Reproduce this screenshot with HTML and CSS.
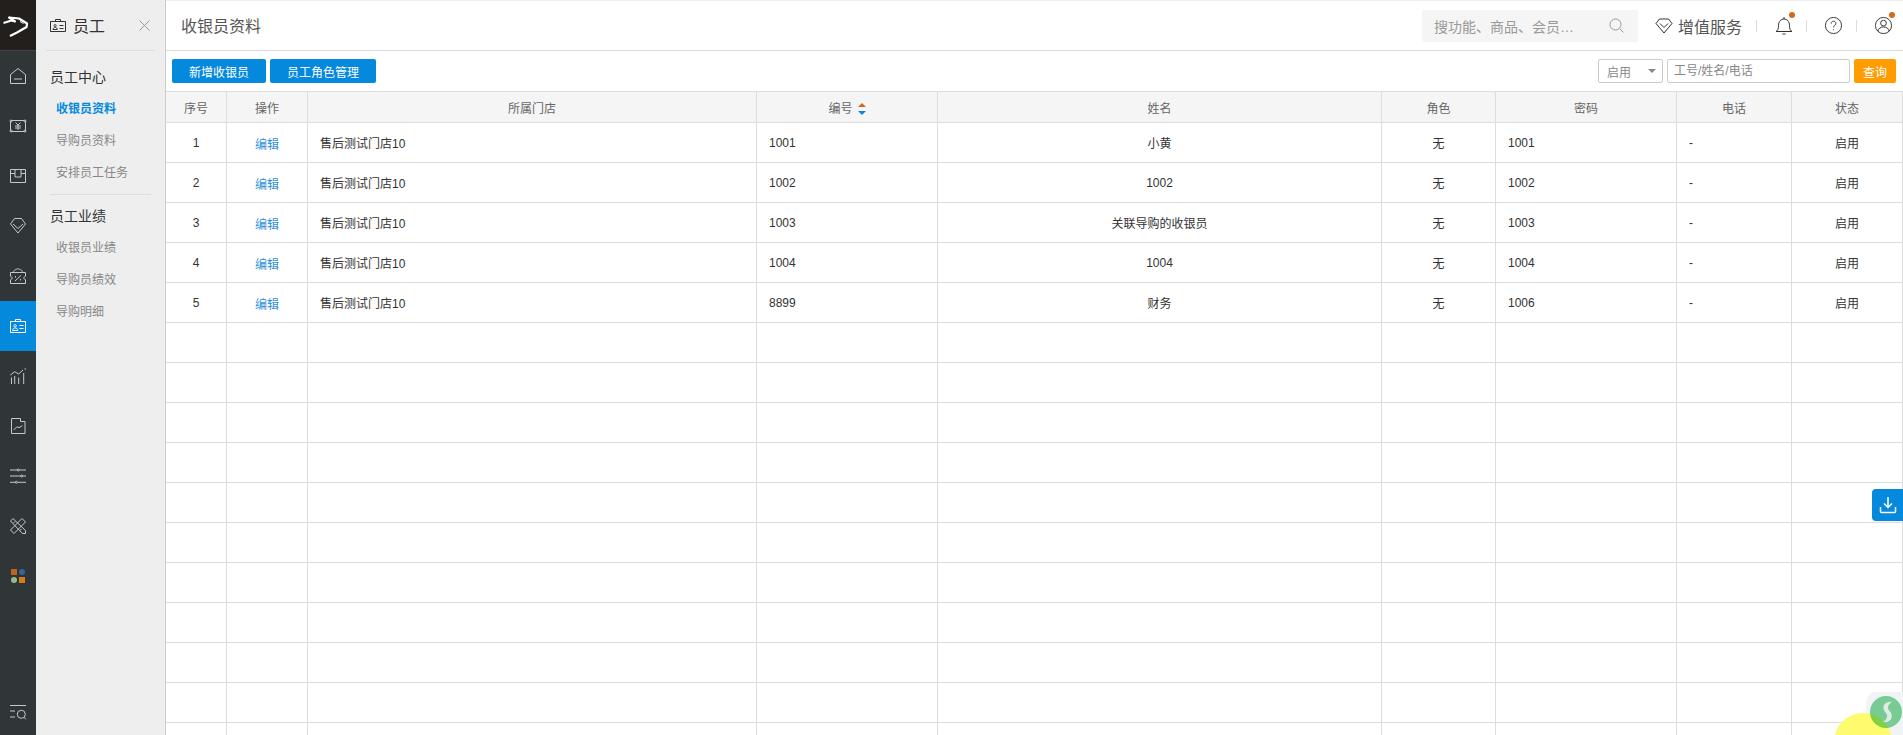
FILE: index.html
```html
<!DOCTYPE html>
<html lang="zh">
<head>
<meta charset="utf-8">
<title>收银员资料</title>
<link rel="stylesheet" href="styles.css">
</head>
<body>
<div class="app">
  <nav class="rail">
    <div class="logo">
      <svg width="36" height="50" viewBox="0 0 36 50"><path class="logo-mark" d="M3.500 23 11.500 20.500 15 21.500 9 17.500 19 18.500 27 23.500 26.500 27 17 32.500 10 36"/><path class="logo-eye" d="M20 21.500l3.500 2"/></svg>
    </div>
    <a class="rail-item"><svg width="18" height="18" viewBox="0 0 18 18"><path d="M1.500 7.500 9 1.500l7.500 6v9h-15zM5 12h8"/></svg></a>
    <a class="rail-item"><svg width="18" height="18" viewBox="0 0 18 18"><path d="M2.500 3.500h13M2.500 14.500h13M1.500 4.500v9M16.500 4.500v9M6.500 5.500 9 8l2.500-2.500M6 9h6M6 11h6M9 8v5"/><circle cx="2" cy="4" r="1"/><circle cx="16" cy="4" r="1"/><circle cx="2" cy="14" r="1"/><circle cx="16" cy="14" r="1"/></svg></a>
    <a class="rail-item"><svg width="18" height="18" viewBox="0 0 18 18"><path d="M1.500 2.500h15v13h-15zM1.500 6.500H6M12 6.500h4.500M6 2.500v7.500h6V2.500"/></svg></a>
    <a class="rail-item"><svg width="18" height="18" viewBox="0 0 18 18"><path d="M5.500 1.500h7l4 5.500L9 16 1.500 7zM4 7l5 4.500L14 7"/></svg></a>
    <a class="rail-item"><svg width="18" height="18" viewBox="0 0 18 18"><path d="M1.500 5.500h15v3.500l-2 2 2 2v3.500h-15V13l2-2-2-2zM4.500 5.500C5 2 7 3 9 1.500c2 1.500 4 .5 4.500 4M6 14l6-5.500M6.500 9v1.500M11.500 12v1.500"/></svg></a>
    <a class="rail-item is-active"><svg width="18" height="18" viewBox="0 0 18 18"><path d="M1.500 4.500h15v11h-15zM6.500 2.500h5v2h-5zM3.500 13.500c.3-3.500 5-3.500 5.300 0zM6.100 7.500a1.200 1.200 0 1 0 .01 0M10.500 8.500h4M10.500 11.500h4"/></svg></a>
    <a class="rail-item"><svg width="18" height="18" viewBox="0 0 18 18"><path d="M1.300 8 5.700 4.700 9.700 7 14 3M2.500 10.500V17M5.700 9v8M9.700 10.500V17M14.700 6v11M15.500 2h1.500"/></svg></a>
    <a class="rail-item"><svg width="18" height="18" viewBox="0 0 18 18"><path d="M2.500 1.500h9v3h4.500v12H2.500zM4.700 13 8 9.700l2 1 3.300-2"/></svg></a>
    <a class="rail-item"><svg width="18" height="18" viewBox="0 0 18 18"><path d="M1 3h7.300m2 0H17M1 9h10.700m2 0H17M1 15.300h5.300m2 0H17"/><circle cx="9.300" cy="3" r="1"/><circle cx="12.700" cy="9" r="1"/><circle cx="7.300" cy="15.300" r="1"/></svg></a>
    <a class="rail-item"><svg width="18" height="18" viewBox="0 0 18 18"><path d="M1.500 4 4 1.500l12.500 12v3h-3zM13 1.500 16.500 5 5 16.500 1.500 13zM6 4.500 4.500 6M12.500 12 11 13.500"/></svg></a>
    <a class="rail-item"><span class="tiles"><i class="tile t1"></i><i class="tile t2"></i><i class="tile t3"></i><i class="tile t4"></i></span></a>
    <a class="rail-item rail-foot"><svg width="18" height="18" viewBox="0 0 18 18"><path d="M1 1.500h16M1 7h5M1 13h5"/><circle cx="12.300" cy="10.300" r="4"/><path d="m15 13.300 2 2"/></svg></a>
  </nav>

  <aside class="subnav">
    <div class="subnav-head">
      <svg class="head-icon" width="16" height="13" viewBox="0 0 16 13"><path d="M.5 2.500h15v10H.5zM5.500.5h5v2h-5zM3 10.500c.3-3 4-3 4.300 0zM5.100 5.500a1.100 1.100 0 1 0 .01 0M9.500 6.500h4M9.500 9.500h4"/></svg>
      <span class="subnav-title">员工</span>
      <svg class="head-close" width="11" height="11" viewBox="0 0 11 11"><path d="m.5.500 10 10m0-10-10 10"/></svg>
    </div>
    <div class="subnav-body">
      <h3 class="group-title">员工中心</h3>
      <a class="group-link is-current">收银员资料</a>
      <a class="group-link">导购员资料</a>
      <a class="group-link">安排员工任务</a>
      <hr class="group-rule">
      <h3 class="group-title">员工业绩</h3>
      <a class="group-link">收银员业绩</a>
      <a class="group-link">导购员绩效</a>
      <a class="group-link">导购明细</a>
    </div>
  </aside>

  <main class="main">
    <header class="topbar">
      <h1 class="page-title">收银员资料</h1>
      <div class="search">
        <span class="search-text">搜功能、商品、会员…</span>
        <svg class="icon-line grey" width="15" height="15" viewBox="0 0 15 15"><circle cx="6.500" cy="6.500" r="5.500"/><path d="m10.500 10.500 4 4"/></svg>
      </div>
      <a class="vip">
        <svg class="icon-line dark" width="18" height="16" viewBox="0 0 18 16"><path d="M4.500 1h9l3.500 4.500L9 15 1 5.500zM5 5.500l4 4 4-4"/></svg>
        <span>增值服务</span>
      </a>
      <i class="sep"></i>
      <span class="top-icon">
        <svg class="icon-line dark" width="18" height="20" viewBox="0 0 18 20"><path d="M1 15.500c2-1 2.500-3 2.500-6C3.500 5.500 6 3 9 3s5.500 2.500 5.500 6.500c0 3 .5 5 2.500 6zM9 1v2M7.500 18h3"/></svg>
        <i class="dot"></i>
      </span>
      <i class="sep"></i>
      <span class="top-icon">
        <svg class="icon-line dark" width="19" height="19" viewBox="0 0 20 20"><circle cx="10" cy="10" r="8.500"/><path d="M7.500 8c0-3.300 5-3.300 5 0 0 2-2.500 2-2.500 4M10 14v1"/></svg>
      </span>
      <i class="sep"></i>
      <span class="top-icon">
        <svg class="icon-line dark" width="19" height="19" viewBox="0 0 20 20"><circle cx="10" cy="10" r="8.500"/><circle cx="10" cy="7.500" r="3"/><path d="M4 16c1-6 11-6 12 0"/></svg>
        <i class="dot"></i>
      </span>
    </header>

    <div class="toolbar">
      <button class="btn btn-add">新增收银员</button>
      <button class="btn btn-role">员工角色管理</button>
      <div class="filters">
        <div class="select"><span>启用</span><i class="caret"></i></div>
        <div class="field">工号/姓名/电话</div>
        <button class="btn btn-query">查询</button>
      </div>
    </div>

    <table class="grid">
      <colgroup>
        <col class="c1"><col class="c2"><col class="c3"><col class="c4"><col class="c5"><col class="c6"><col class="c7"><col class="c8"><col class="c9">
      </colgroup>
      <thead>
        <tr>
          <th>序号</th><th>操作</th><th>所属门店</th>
          <th>编号<span class="sort"><i class="sort-up"></i><i class="sort-down"></i></span></th>
          <th>姓名</th><th>角色</th><th>密码</th><th>电话</th><th>状态</th>
        </tr>
      </thead>
      <tbody>
        <tr><td class="mid">1</td><td class="mid op"><a class="edit">编辑</a></td><td>售后测试门店10</td><td>1001</td><td class="mid">小黄</td><td class="mid">无</td><td>1001</td><td>-</td><td class="mid">启用</td></tr>
        <tr><td class="mid">2</td><td class="mid op"><a class="edit">编辑</a></td><td>售后测试门店10</td><td>1002</td><td class="mid">1002</td><td class="mid">无</td><td>1002</td><td>-</td><td class="mid">启用</td></tr>
        <tr><td class="mid">3</td><td class="mid op"><a class="edit">编辑</a></td><td>售后测试门店10</td><td>1003</td><td class="mid">关联导购的收银员</td><td class="mid">无</td><td>1003</td><td>-</td><td class="mid">启用</td></tr>
        <tr><td class="mid">4</td><td class="mid op"><a class="edit">编辑</a></td><td>售后测试门店10</td><td>1004</td><td class="mid">1004</td><td class="mid">无</td><td>1004</td><td>-</td><td class="mid">启用</td></tr>
        <tr><td class="mid">5</td><td class="mid op"><a class="edit">编辑</a></td><td>售后测试门店10</td><td>8899</td><td class="mid">财务</td><td class="mid">无</td><td>1006</td><td>-</td><td class="mid">启用</td></tr>
        <tr><td></td><td></td><td></td><td></td><td></td><td></td><td></td><td></td><td></td></tr>
        <tr><td></td><td></td><td></td><td></td><td></td><td></td><td></td><td></td><td></td></tr>
        <tr><td></td><td></td><td></td><td></td><td></td><td></td><td></td><td></td><td></td></tr>
        <tr><td></td><td></td><td></td><td></td><td></td><td></td><td></td><td></td><td></td></tr>
        <tr><td></td><td></td><td></td><td></td><td></td><td></td><td></td><td></td><td></td></tr>
        <tr><td></td><td></td><td></td><td></td><td></td><td></td><td></td><td></td><td></td></tr>
        <tr><td></td><td></td><td></td><td></td><td></td><td></td><td></td><td></td><td></td></tr>
        <tr><td></td><td></td><td></td><td></td><td></td><td></td><td></td><td></td><td></td></tr>
        <tr><td></td><td></td><td></td><td></td><td></td><td></td><td></td><td></td><td></td></tr>
        <tr><td></td><td></td><td></td><td></td><td></td><td></td><td></td><td></td><td></td></tr>
        <tr><td></td><td></td><td></td><td></td><td></td><td></td><td></td><td></td><td></td></tr>
      </tbody>
    </table>
  </main>
</div>

<a class="download">
  <svg width="18" height="18" viewBox="0 0 18 18"><path d="M9 1v10M5 7.500 9 11.500l4-4M1.500 11v4.500a1 1 0 0 0 1 1h13a1 1 0 0 0 1-1V11"/></svg>
</a>
<div class="helper-pad"></div>
<div class="helper-glow"></div>
<svg class="helper-badge" width="32" height="32" viewBox="0 0 32 32"><circle cx="16" cy="16" r="16" fill="#7fd49a"/><path d="M22 6c-6-1-10 3-8 8 1 3 4 4 3 7-.5 2-2 4-4 5 6 1 10-3 8.500-8-1-3-4-4-3.500-7 .3-2 2-4 4-5z" fill="#eef6f0"/></svg>
</body>
</html>
```

FILE: styles.css
```css
* { box-sizing: border-box; }
html, body { margin: 0; height: 100%; overflow: hidden; background: #fff; }
body { font-family: "Liberation Sans", "Noto Sans CJK SC", sans-serif; font-size: 12px; color: #333; }
a { text-decoration: none; }

.app { display: flex; height: 735px; overflow: hidden; }

/* icon rail */
.rail { width: 36px; flex: none; background: #303537; display: flex; flex-direction: column; }
.logo { height: 51px; flex: none; background: #231f1c; border-bottom: 1px solid #3c4449; }
.logo svg { display: block; }
.logo-mark { fill: none; stroke: #fff; stroke-width: 2.200; stroke-linejoin: round; }
.logo-eye { fill: none; stroke: #fff; stroke-width: 1; }
.rail-item { height: 50px; flex: none; display: flex; align-items: center; justify-content: center; }
.rail-item svg { fill: none; stroke: #c6c9c9; stroke-width: 1; }
.rail-item.is-active { background: #0589dd; }
.rail-item.is-active svg { stroke: #fff; }
.rail-foot { margin-top: auto; height: 44px; }
.tiles { display: grid; grid-template-columns: 6px 6px; gap: 2px; }
.tile { display: block; width: 6px; height: 6px; }
.t1 { background: #bd651f; }
.t2 { background: #32669f; border-radius: 50%; }
.t3 { background: #94b992; border-radius: 50%; }
.t4 { background: #d97c14; }

/* secondary nav */
.subnav { width: 130px; flex: none; background: #eee; border-right: 1px solid #ccc; }
.subnav-head { height: 51px; margin: 0 10px; padding: 0 4px; border-bottom: 1px solid #ddd; display: flex; align-items: center; }
.head-icon { fill: none; stroke: #333; stroke-width: 1; flex: none; }
.subnav-title { font-size: 16px; color: #333; margin-left: 7px; }
.head-close { fill: none; stroke: #999; stroke-width: 1; margin-left: auto; flex: none; margin-right: 1px; }
.subnav-body { padding: 10px 14px 0; }
.group-title { margin: 0; font-size: 14px; font-weight: 400; line-height: 32px; color: #333; }
.group-link { display: block; line-height: 32px; padding-left: 6px; color: #888; }
.group-link.is-current { color: #0589dd; font-weight: 700; }
.group-rule { margin: 5px 0; border: 0; border-top: 1px solid #ddd; }

/* main */
.main { flex: 1; min-width: 0; overflow: hidden; }
.topbar { height: 51px; border-top: 1px solid #eee; border-bottom: 1px solid #ddd; display: flex; align-items: center; padding-left: 15px; }
.page-title { margin: 0 auto 2px 0; font-size: 16px; font-weight: 400; color: #555; }
.search { width: 216px; height: 32px; background: #f5f5f5; border-radius: 3px; display: flex; align-items: center; justify-content: space-between; padding: 0 14px 0 12px; font-size: 14px; color: #999; }
.icon-line { fill: none; stroke-width: 1; display: block; flex: none; }
.icon-line.grey { stroke: #999; }
.icon-line.dark { stroke: #333; }
.vip { display: flex; align-items: center; gap: 5px; margin-left: 17px; font-size: 16px; color: #555; }
.sep { width: 1px; height: 12px; background: #ddd; flex: none; }
.vip + .sep { margin-left: 14px; }
.top-icon { position: relative; width: 49px; padding-left: 4px; display: flex; justify-content: center; flex: none; }
.top-icon:last-child { width: 46px; padding-left: 7px; }
.dot { position: absolute; top: -4px; left: 32px; width: 6px; height: 6px; border-radius: 50%; background: #d2691e; }

.toolbar { height: 40px; display: flex; align-items: center; padding: 0 7px 0 6px; gap: 4px; }
.btn { height: 24px; border: 0; border-radius: 2px; padding: 0; font: inherit; color: #fff; background: #0589dd; }
.btn-add { width: 94px; }
.btn-role { width: 106px; }
.btn-query { width: 42px; background: #ff9c00; }
.filters { margin-left: auto; display: flex; gap: 4px; }
.select { width: 65px; height: 24px; border: 1px solid #ccc; border-radius: 2px; padding: 0 6px 0 8px; display: flex; align-items: center; justify-content: space-between; color: #888; }
.caret { border: 4px solid transparent; border-top: 4px solid #888; border-bottom: 0; width: 0; height: 0; display: block; }
.field { width: 183px; height: 24px; border: 1px solid #ccc; border-radius: 2px; padding: 0 6px; line-height: 22px; color: #888; }

/* table */
.grid { width: 1737px; table-layout: fixed; border-collapse: separate; border-spacing: 0; border-top: 1px solid #ddd; }
.c1 { width: 61px; } .c2 { width: 81px; } .c3 { width: 449px; } .c4 { width: 181px; } .c5 { width: 444px; }
.c6 { width: 114px; } .c7 { width: 181px; } .c8 { width: 115px; } .c9 { width: 111px; }
.grid th { height: 31px; padding: 0; font-weight: 400; color: #666; background: #f5f5f5; border-right: 1px solid #ddd; border-bottom: 1px solid #ddd; text-align: center; }
.grid td { height: 40px; padding: 0 12px; border-right: 1px solid #ddd; border-bottom: 1px solid #ddd; color: #333; }
.grid td.mid { text-align: center; }
.grid td.op { padding-top: 2px; }
.edit { color: #2f8fdc; }
.sort { display: inline-block; vertical-align: middle; margin-left: 5px; width: 8px; }
.sort-up, .sort-down { display: block; width: 0; height: 0; border: 4px solid transparent; }
.sort-up { border-bottom: 4px solid #d2691e; border-top: 0; margin-bottom: 4px; }
.sort-down { border-top: 4px solid #0589dd; border-bottom: 0; }

/* floating */
.download { position: fixed; right: 0; top: 489px; width: 31px; height: 32px; background: #0589dd; border-radius: 4px 0 0 4px; display: flex; align-items: center; justify-content: center; }
.download svg { fill: none; stroke: #fff; stroke-width: 1.500; }
.helper-pad { position: fixed; right: 0; bottom: 0; width: 37px; height: 43px; background: #f0f4f4; border-radius: 10px 0 0 0; }
.helper-glow { position: fixed; left: 1834px; top: 713px; width: 58px; height: 58px; border-radius: 50%; background: #fffb6e; }
.helper-badge { position: fixed; left: 1870px; top: 696px; mix-blend-mode: multiply; }
```
